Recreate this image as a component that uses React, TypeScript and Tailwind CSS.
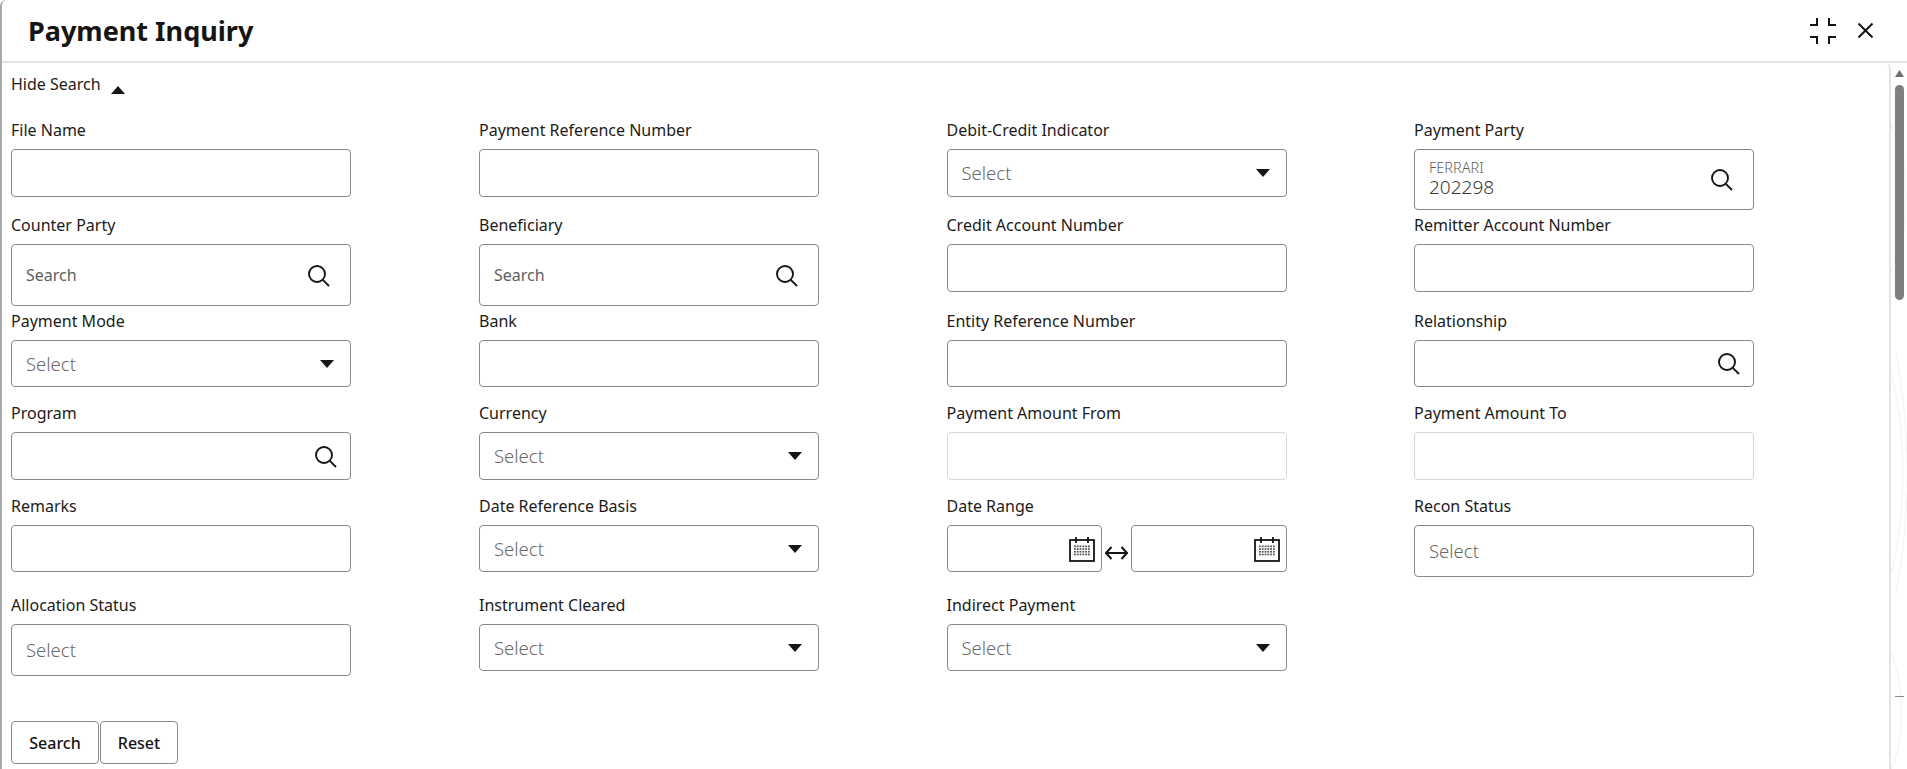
import type { ReactNode } from 'react'

const labelFont = "font-['Noto_Sans',sans-serif]"

function SearchIcon() {
  return (
    <svg width="23" height="23" viewBox="0 0 23 23" fill="none" stroke="#161513" strokeWidth="1.9">
      <circle cx="10" cy="10" r="8" />
      <path d="M15.8 15.8 L22 22" />
    </svg>
  )
}

function CaretDown() {
  return (
    <svg width="14" height="8" viewBox="0 0 14 8">
      <path d="M0 0 H14 L7 8 Z" fill="#161513" />
    </svg>
  )
}

function CalendarIcon() {
  const dots = []
  for (let r = 0; r < 4; r++) {
    for (let c = 0; c < 6; c++) {
      dots.push(<rect key={`${r}-${c}`} x={5 + c * 2.8} y={9.5 + r * 2.7} width="1.8" height="1.7" fill="#555" />)
    }
  }
  return (
    <svg width="26" height="26" viewBox="0 0 26 26" fill="none">
      <rect x="1" y="4" width="24" height="21" stroke="#161513" strokeWidth="1.8" />
      <path d="M7 1 V7 M19 1 V7" stroke="#161513" strokeWidth="1.8" />
      {dots}
    </svg>
  )
}

function Box({ h, children, disabled }: { h: string; children?: ReactNode; disabled?: boolean }) {
  return (
    <div className={`${h} w-[340px] rounded-[4px] border flex items-center justify-between bg-white ${disabled ? 'border-[#d6d6d6]' : 'border-[#8b8a88]'}`}>
      {children}
    </div>
  )
}

function Field({ label, children }: { label: string; children: ReactNode }) {
  return (
    <div>
      <div className="h-[38px] flex items-center text-[16px] leading-none text-[#1d1b19]">{label}</div>
      {children}
    </div>
  )
}

function TextInput({ label, disabled, h = 'h-[48px]' }: { label: string; disabled?: boolean; h?: string }) {
  return (
    <Field label={label}>
      <Box h={h} disabled={disabled} />
    </Field>
  )
}

function SelectInput({ label, h = 'h-[48px]' }: { label: string; h?: string }) {
  return (
    <Field label={label}>
      <Box h={h}>
        <span className="pl-[14px] text-[18.5px] font-light text-[#6b6a68]">Select</span>
        <span className="pr-[16px] flex"><CaretDown /></span>
      </Box>
    </Field>
  )
}

function PlainSelect({ label }: { label: string }) {
  return (
    <Field label={label}>
      <Box h="h-[52px]">
        <span className="pl-[14px] text-[18.5px] font-light text-[#6b6a68]">Select</span>
      </Box>
    </Field>
  )
}

function LookupInput({ label }: { label: string }) {
  return (
    <Field label={label}>
      <Box h="h-[62px]">
        <span className="pl-[14px] text-[16px] text-[#5f5e5c]">Search</span>
        <span className="pr-[20px] flex"><SearchIcon /></span>
      </Box>
    </Field>
  )
}

function IconInput({ label, h = 'h-[48px]' }: { label: string; h?: string }) {
  return (
    <Field label={label}>
      <Box h={h}>
        <span />
        <span className="pr-[13px] flex"><SearchIcon /></span>
      </Box>
    </Field>
  )
}

function Row({ h, children }: { h: string; children: ReactNode }) {
  return <div className={`${h} grid grid-cols-[468px_467.5px_467.5px_467.5px]`}>{children}</div>
}

export default function App() {
  return (
    <div className={`${labelFont} w-[1907px] h-[769px] overflow-hidden flex flex-col bg-white border-l-2 border-[#a9a9a9] rounded-tl-[6px]`}>
      <header className="h-[63px] shrink-0 flex items-center justify-between border-b-2 border-[#e2e2e2] pl-[26px]">
        <h1 className="text-[27px] font-bold text-[#161513] leading-none">Payment Inquiry</h1>
        <div className="flex items-center gap-[22px] pr-[34px]">
          <svg width="26" height="26" viewBox="0 0 26 26" fill="none" stroke="#161513" strokeWidth="2">
            <path d="M7 0 V7 H0 M19 0 V7 H26 M0 19 H7 V26 M26 19 H19 V26" />
          </svg>
          <svg width="15" height="15" viewBox="0 0 15 15" fill="none" stroke="#161513" strokeWidth="2">
            <path d="M0.5 0.5 L14.5 14.5 M14.5 0.5 L0.5 14.5" />
          </svg>
        </div>
      </header>

      <div className="flex-1 flex min-h-0">
        <main className="w-[1889px] shrink-0 border-r-2 border-[#e2e2e2] rounded-tr-[6px] pl-[9px]">
          <div className="h-[48px] flex items-center gap-[10px] pb-[7px] text-[16px] text-[#1d1b19]">
            <span>Hide Search</span>
            <svg className="mt-[13px]" width="14" height="8" viewBox="0 0 14 8">
              <path d="M0 8 H14 L7 0 Z" fill="#161513" />
            </svg>
          </div>

          <Row h="h-[95px]">
            <TextInput label="File Name" />
            <TextInput label="Payment Reference Number" />
            <SelectInput label="Debit-Credit Indicator" />
            <Field label="Payment Party">
              <Box h="h-[61px]">
                <div className="pl-[14px] pb-[3px]">
                  <div className="text-[14.5px] leading-[18px] font-light text-[#5f5e5c]">FERRARI</div>
                  <div className="text-[19px] leading-[22px] font-light text-[#3a3937]">202298</div>
                </div>
                <span className="pr-[20px] flex"><SearchIcon /></span>
              </Box>
            </Field>
          </Row>

          <Row h="h-[96px]">
            <LookupInput label="Counter Party" />
            <LookupInput label="Beneficiary" />
            <TextInput label="Credit Account Number" />
            <TextInput label="Remitter Account Number" />
          </Row>

          <Row h="h-[92px]">
            <SelectInput label="Payment Mode" h="h-[47px]" />
            <TextInput label="Bank" h="h-[47px]" />
            <TextInput label="Entity Reference Number" h="h-[47px]" />
            <IconInput label="Relationship" h="h-[47px]" />
          </Row>

          <Row h="h-[93px]">
            <IconInput label="Program" />
            <SelectInput label="Currency" />
            <TextInput label="Payment Amount From" disabled />
            <TextInput label="Payment Amount To" disabled />
          </Row>

          <Row h="h-[99px]">
            <TextInput label="Remarks" h="h-[47px]" />
            <SelectInput label="Date Reference Basis" h="h-[47px]" />
            <Field label="Date Range">
              <div className="flex w-[340px] h-[47px] items-center justify-between">
                <div className="w-[155px] h-full rounded-[4px] border border-[#8b8a88] flex items-center justify-end pr-[6px]"><CalendarIcon /></div>
                <svg className="mt-[8px]" width="23" height="14" viewBox="0 0 23 14" fill="none" stroke="#161513" strokeWidth="2">
                  <path d="M6.5 1 L1 7 L6.5 13 M16.5 1 L22 7 L16.5 13 M1 7 H22" />
                </svg>
                <div className="w-[156px] h-full rounded-[4px] border border-[#8b8a88] flex items-center justify-end pr-[6px]"><CalendarIcon /></div>
              </div>
            </Field>
            <PlainSelect label="Recon Status" />
          </Row>

          <Row h="h-[135px]">
            <PlainSelect label="Allocation Status" />
            <SelectInput label="Instrument Cleared" h="h-[47px]" />
            <SelectInput label="Indirect Payment" h="h-[47px]" />
            <div />
          </Row>

          <div className="flex gap-[1px]">
            <button className="w-[88px] h-[43px] rounded-[4px] border border-[#8b8a88] text-[16px] font-medium text-[#161513]">Search</button>
            <button className="w-[78px] h-[43px] rounded-[4px] border border-[#8b8a88] text-[16px] font-medium text-[#161513]">Reset</button>
          </div>
        </main>

        <aside className="relative flex-1 flex flex-col items-center pt-[7px]">
          <svg className="absolute inset-0" width="16" height="706" viewBox="0 0 16 706" fill="none" stroke="#f1f1f1" strokeWidth="1">
            <path d="M0 60 C14 100 14 170 0 210 M4 40 C18 110 18 160 4 230 M0 310 C16 370 16 450 0 510 M5 290 C20 370 20 450 5 530 M0 590 C14 620 14 680 0 706" />
          </svg>
          <svg className="relative" width="9" height="7" viewBox="0 0 9 7">
            <path d="M0 7 H9 L4.5 0 Z" fill="#6f6f6f" />
          </svg>
          <div className="relative mt-[8px] w-[9px] h-[215px] rounded-[5px] bg-[#7f7f7f]" />
          <div className="relative mt-[396px] w-[9px] h-[1px] bg-[#8a8a8a]" />
        </aside>
      </div>
    </div>
  )
}
